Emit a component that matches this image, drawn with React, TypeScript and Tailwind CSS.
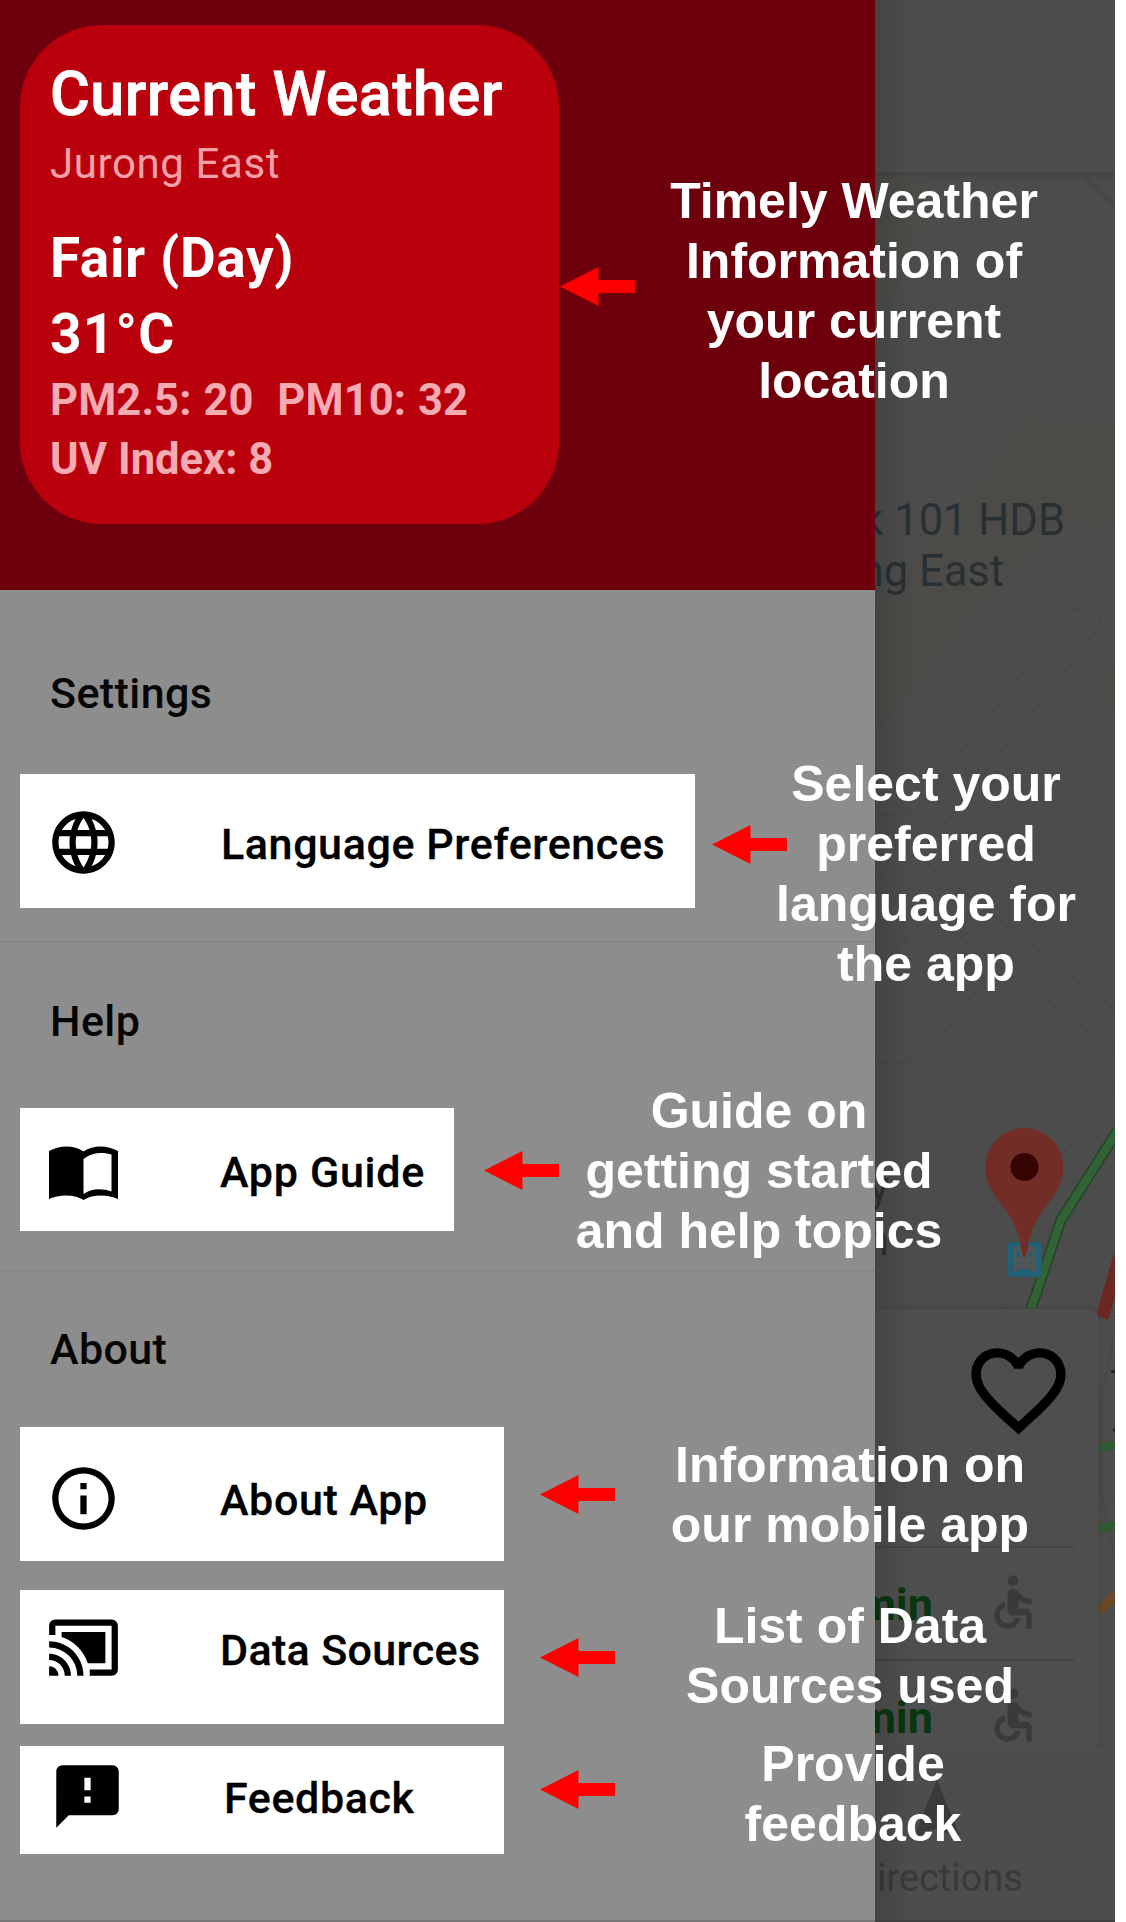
import type { ReactNode } from "react";
import {
  MdAccessible,
  MdCastConnected,
  MdFavoriteBorder,
  MdFeedback,
  MdInfoOutline,
  MdLanguage,
  MdNavigation,
} from "react-icons/md";

function BookIcon() {
  return (
    <svg className="h-[54px] w-[69px]" viewBox="0 0 69 54" fill="none">
      <path d="M0 5C10-1 25-1.500 34.500 5.500C44-1.500 59-1 69 5V53C59 48.500 44 48 34.500 54C25 48 10 48.500 0 53Z" fill="#000" />
      <path d="M34.500 13C42 6.500 54 5.500 62.500 8.500V45.500C53 42 42 42 34.500 48Z" fill="#fff" />
    </svg>
  );
}

function Row({ box, icon, label, text }: { box: string; icon: ReactNode; label: string; text: string }) {
  return (
    <div className={`ml-5 flex items-start bg-white ${box}`}>
      <div className="w-[200px] shrink-0">{icon}</div>
      <span
        className={`text-[43px] leading-[60px] font-medium whitespace-nowrap [-webkit-text-stroke:0.3px_#000] ${text}`}
      >
        {label}
      </span>
    </div>
  );
}

function Heading({ children, className }: { children: ReactNode; className: string }) {
  return (
    <h2
      className={`pl-[50px] text-[43px] leading-[60px] font-medium tracking-[0.4px] text-[#060606] ${className}`}
    >
      {children}
    </h2>
  );
}

function Callout({ lines, className }: { lines: string[]; className: string }) {
  return (
    <div
      className={`absolute flex w-[400px] flex-col items-center font-['Liberation_Sans',Arial,sans-serif] text-[50px] leading-[60px] font-bold whitespace-nowrap text-white ${className}`}
    >
      {lines.map((l) => (
        <span key={l}>{l}</span>
      ))}
    </div>
  );
}

function Arrow({ className }: { className: string }) {
  return (
    <svg className={`absolute h-[39px] w-[75px] ${className}`} viewBox="0 0 75 39">
      <path d="M0 19.500L38.500 0V13H75V26H38.500V39Z" fill="#f00" />
    </svg>
  );
}

function Drawer() {
  return (
    <aside className="flex h-full w-[875px] shrink-0 flex-col bg-[#8d8d8d] text-black">
      <header className="h-[590px] bg-[#6e000d] pt-[25px] pl-5">
        <div className="flex h-[499px] w-[539px] flex-col rounded-[82px] bg-[#b9000c] pt-[34px] pl-[30px] whitespace-pre">
          <h1 className="text-[61px] leading-[70px] font-medium tracking-[0.5px] text-white [-webkit-text-stroke:0.8px_#fff]">
            Current Weather
          </h1>
          <p className="mt-[7px] text-[42px] leading-[56px] tracking-[0.6px] text-[#f3a1a7]">Jurong East</p>
          <p className="mt-7 text-[55px] leading-[76px] font-bold tracking-[0.6px] text-white">Fair (Day)</p>
          <p className="text-[55px] leading-[76px] font-bold tracking-[1.2px] text-white">31°C</p>
          <p className="-mt-px text-[43.5px] leading-[59px] font-bold tracking-[0.1px] text-[#f4acb2] [word-spacing:1px]">
            PM2.5: 20  PM10: 32
          </p>
          <p className="text-[43.5px] leading-[59px] font-bold text-[#f4acb2]">UV Index: 8</p>
        </div>
      </header>

      <section className="h-[351px] shrink-0">
        <Heading className="pt-[73px]">Settings</Heading>
        <Row
          box="mt-[51px] h-[134px] w-[675px]"
          icon={<MdLanguage className="mt-[31px] ml-[26px] size-[75px]" />}
          label="Language Preferences"
          text="mt-[40px] ml-px tracking-[0.6px]"
        />
      </section>
      <section className="h-[329px] shrink-0 border-t-2 border-[#868686]">
        <Heading className="pt-[48px]">Help</Heading>
        <Row
          box="mt-[57px] h-[123px] w-[434px]"
          icon={
            <div className="mt-[38px] ml-[29px]">
              <BookIcon />
            </div>
          }
          label="App Guide"
          text="mt-[34px] tracking-[0.7px]"
        />
      </section>
      <section className="h-[650px] shrink-0 border-t-2 border-[#868686]">
        <Heading className="pt-[47px]">About</Heading>
        <Row
          box="mt-[48px] h-[134px] w-[484px]"
          icon={<MdInfoOutline className="mt-[34px] ml-[26px] size-[75px]" />}
          label="About App"
          text="mt-[43px] tracking-[0.6px]"
        />
        <Row
          box="mt-[29px] h-[134px] w-[484px]"
          icon={<MdCastConnected className="mt-[20px] ml-[26px] size-[75px]" />}
          label="Data Sources"
          text="mt-[30px] tracking-[0.35px]"
        />
        <Row
          box="mt-[22px] h-[108px] w-[484px]"
          icon={<MdFeedback className="mt-[13px] ml-[30px] size-[75px]" />}
          label="Feedback"
          text="mt-[22px] ml-1 tracking-[0.6px]"
        />
      </section>
      <div className="h-0.5 shrink-0 bg-[#777]" />
    </aside>
  );
}

function MapDrawing() {
  return (
    <svg className="absolute inset-0 h-full w-full" viewBox="875 0 240 1922" fill="none">
      <g fill="#4d4b48">
        <path d="M875 176L920 173L932 212L885 315L875 328Z" />
        <path d="M1026 418L1115 424V526L1060 524L985 600L875 735V612L965 500Z" />
        <path d="M1115 664L1093 688L1115 716Z" />
      </g>
      <g stroke="#484848" strokeWidth="1.500">
        <path d="M1083 176L1115 205" strokeWidth="4" />
        <path d="M915 812L1065 618C1078 600 1104 608 1099 628L940 830M875 816L915 812" />
        <path d="M925 862L1115 1010M950 930L1115 1050M875 1063L922 1061L985 980M875 880L890 862M885 960L920 925" />
        <path d="M1115 1084L1090 1120L1062 1157M1018 1280L1003 1309M1113 1340L1101 1400V1490L1115 1560M1099 1500L1115 1497" />
      </g>
      <path d="M1118 1130L1061 1220L1030 1312" stroke="#234426" strokeWidth="11" />
      <path d="M1118 1130L1061 1220L1030 1312" stroke="#316336" strokeWidth="8" />
      <path d="M1120 1256L1102 1318" stroke="#6c2723" strokeWidth="13" />
      <path d="M1098 1447L1115 1446M1098 1528L1115 1526" stroke="#2f5b32" strokeWidth="9" />
      <path d="M1098 1612L1117 1594" stroke="#6e4823" strokeWidth="9" />
      <path d="M1111 1371.500H1115M1113 1430H1115" stroke="#1c2124" strokeWidth="3" />
      <rect x="1007" y="1242" width="35" height="35" rx="5" fill="#1f6176" />
      <path
        d="M1013 1250Q1013 1246 1017 1246H1032Q1036 1246 1036 1250V1267L1034 1272H1031L1029 1269H1019L1017 1272H1014L1013 1267Z"
        fill="#545656"
      />
      <path d="M1018 1251V1256H1020M1031 1251V1256H1029M1017 1263H1020M1029 1263H1032" stroke="#1f6176" strokeWidth="3" />
      <path
        d="M1024.500 1257C1021 1257 1022.500 1243 1015 1226C1006 1205 985.500 1193 985.500 1167A39 39 0 0 1 1063.500 1167C1063.500 1193 1043 1205 1034 1226C1026.500 1243 1028 1257 1024.500 1257Z"
        fill="#712d26"
      />
      <circle cx="1024.500" cy="1167" r="14" fill="#350300" />
    </svg>
  );
}

function ArrivalRow() {
  return (
    <div className="flex h-[112.500px] items-start border-t-2 border-[#434343]">
      <div className="flex w-[58px] justify-end overflow-hidden">
        <span className="mt-[27px] text-[45px] leading-[60px] font-bold text-[#07360f]">min</span>
      </div>
      <MdAccessible className="mt-[22px] ml-[48px] size-[64px] shrink-0 text-[#3a3a3a]" />
    </div>
  );
}

function Backdrop() {
  return (
    <main className="relative h-full w-[240px] shrink-0 overflow-hidden bg-[#4c4c4c]">
      <MapDrawing />
      <div className="absolute inset-x-0 top-0 h-[172px] bg-[#4d4d4d] shadow-[0_2px_8px_#414141]" />
      <div className="absolute top-[491px] right-[50px] text-[43.5px] leading-[60px] whitespace-nowrap text-[#293034]">
        k 101 HDB
      </div>
      <div className="absolute top-[542px] right-[111px] text-[43.5px] leading-[60px] whitespace-nowrap text-[#293034]">
        ng East
      </div>
      <div className="absolute top-[1161px] right-[226px] text-right text-[43.5px] leading-[53px] text-[#293034]">
        y<br />n
      </div>
      <div className="absolute top-[1309px] left-0 h-[440px] w-[224px] rounded-tr-[10px] bg-[#4e4e4e] shadow-[0_0_4px_#3d3d3d]">
        <MdFavoriteBorder className="mt-[25px] ml-[87px] size-[113px] text-black" />
        <div className="mt-[99px] w-[199px]">
          <ArrivalRow />
          <ArrivalRow />
        </div>
      </div>
      <div className="absolute inset-x-0 top-[1747px] h-[175px] bg-[#4d4d4d]">
        <MdNavigation className="mt-[27px] ml-[26px] size-[72px] text-[#3a3a3a]" />
        <div className="mt-[2px] pl-[2px] text-[38px] leading-[60px] text-[#393939]">irections</div>
      </div>
      <div className="absolute inset-y-0 left-0 w-[36px] bg-linear-to-r from-black/12 to-transparent" />
      <div className="absolute inset-x-0 bottom-0 h-0.5 bg-[#414141]" />
    </main>
  );
}

export default function App() {
  return (
    <div className="relative flex h-[1922px] w-[1126px] overflow-hidden bg-white font-[Roboto,sans-serif]">
      <Drawer />
      <Backdrop />

      <Arrow className="top-[267px] left-[560px]" />
      <Callout className="top-[171px] left-[654px]" lines={["Timely Weather", "Information of", "your current", "location"]} />
      <Arrow className="top-[825px] left-[712px]" />
      <Callout className="top-[754px] left-[726px]" lines={["Select your", "preferred", "language for", "the app"]} />
      <Arrow className="top-[1151px] left-[484px]" />
      <Callout className="top-[1081px] left-[559px]" lines={["Guide on", "getting started", "and help topics"]} />
      <Arrow className="top-[1475px] left-[540px]" />
      <Callout className="top-[1435px] left-[650px]" lines={["Information on", "our mobile app"]} />
      <Arrow className="top-[1638px] left-[540px]" />
      <Callout className="top-[1596px] left-[650px]" lines={["List of Data", "Sources used"]} />
      <Arrow className="top-[1770px] left-[540px]" />
      <Callout className="top-[1734px] left-[653px]" lines={["Provide", "feedback"]} />
    </div>
  );
}
